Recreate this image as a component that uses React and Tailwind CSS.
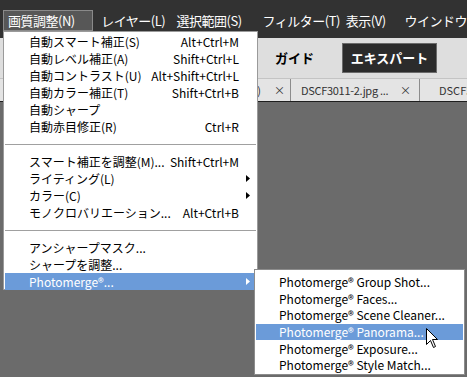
import React from 'react';

const font = { fontFamily: '"Noto Sans CJK JP", "Liberation Sans", sans-serif' };

const mainItems = [
  { label: '自動スマート補正(S)', key: 'Alt+Ctrl+M' },
  { label: '自動レベル補正(A)', key: 'Shift+Ctrl+L' },
  { label: '自動コントラスト(U)', key: 'Alt+Shift+Ctrl+L' },
  { label: '自動カラー補正(T)', key: 'Shift+Ctrl+B' },
  { label: '自動シャープ' },
  { label: '自動赤目修正(R)', key: 'Ctrl+R' },
  'sep',
  { label: 'スマート補正を調整(M)...', key: 'Shift+Ctrl+M' },
  { label: 'ライティング(L)', sub: true },
  { label: 'カラー(C)', sub: true },
  { label: 'モノクロバリエーション...', key: 'Alt+Ctrl+B' },
  'sep',
  { label: 'アンシャープマスク...' },
  { label: 'シャープを調整...' },
  { label: 'Photomerge®...', sub: true, active: true },
];

const subItems = [
  'Photomerge® Group Shot...',
  'Photomerge® Faces...',
  'Photomerge® Scene Cleaner...',
  'Photomerge® Panorama...',
  'Photomerge® Exposure...',
  'Photomerge® Style Match...',
];

function Arrow({ white }) {
  return (
    <svg width="4" height="7" viewBox="0 0 4 7" className="absolute right-[6px] top-[5px]">
      <path d="M0 0 L4 3.5 L0 7 Z" fill={white ? '#ffffff' : '#000000'} />
    </svg>
  );
}

export default function App() {
  return (
    <div className="relative w-[467px] h-[377px] overflow-hidden bg-[#6b6b6b] text-[12px]" style={font}>
      {/* menubar */}
      <div className="h-[38px] bg-[#323232] flex items-start pt-[10px] text-white text-[13px] tracking-[-0.5px]">
        <div className="ml-[3px] w-[92px] h-[21px] pl-[4px] bg-[#575757] border border-[#8a8a8a] leading-[19px]">画質調整(N)</div>
        <div className="w-[85px] pl-[8px] leading-[21px]">レイヤー(L)</div>
        <div className="w-[88px] leading-[21px]">選択範囲(S)</div>
        <div className="w-[85px] leading-[21px]">フィルター(T)</div>
        <div className="w-[60px] leading-[21px]">表示(V)</div>
        <div className="leading-[21px] whitespace-nowrap">ウインドウ</div>
      </div>

      {/* mode bar */}
      <div className="h-[40px] bg-[#dedede] flex items-center">
        <div className="ml-[275px] w-[67px] font-bold text-[13px] text-black">ガイド</div>
        <div className="w-[95px] h-[30px] bg-[#2b2b2b] border border-[#6a6a6a] flex items-center justify-center text-white font-bold text-[13px]">
          エキスパート
        </div>
      </div>

      {/* tabs */}
      <div className="h-[24px] bg-[#e4e4e4] border-t border-[#c4c4c4] border-b border-b-[#1e1e1e] flex text-[11px] text-[#333] whitespace-nowrap">
        <div className="w-[291px] shrink-0 border-r border-[#8c8c8c] flex items-center justify-end pr-[5px] gap-[13px]">
          <span>8)</span>
          <span>×</span>
        </div>
        <div className="w-[129px] shrink-0 border-r border-[#8c8c8c] flex items-center pl-[10px] pr-[8px] justify-between">
          <span className="tracking-[-0.3px]">DSCF3011-2.jpg ...</span>
          <span>×</span>
        </div>
        <div className="flex items-center pl-[19px]">DSCF3</div>
      </div>

      {/* main dropdown */}
      <div className="absolute left-[3px] top-[31px] w-[255px] h-[259px] bg-white border border-[#9a9a9a] pt-[1px] px-[1px] text-black">
        {mainItems.map((it, i) =>
          it === 'sep' ? (
            <div key={i} className="h-[18px] flex items-center">
              <div className="w-full h-px bg-[#a0a0a0]" />
            </div>
          ) : (
            <div
              key={i}
              className={`relative h-[17px] flex items-center pl-[24px] pr-[17px] leading-none ${it.active ? 'bg-[#6b9bd9] text-white' : ''}`}
            >
              <span className="flex-1 whitespace-nowrap">{it.label}</span>
              {it.key && <span className="whitespace-nowrap">{it.key}</span>}
              {it.sub && <Arrow white={it.active} />}
            </div>
          )
        )}
      </div>

      {/* submenu */}
      <div className="absolute left-[254px] top-[269px] w-[211px] h-[106px] bg-white border border-[#8c8c8c] pt-[4px] px-[1px] text-black">
        {subItems.map((s, i) => (
          <div
            key={i}
            className={`h-[16.6px] flex items-center pl-[23px] leading-none whitespace-nowrap ${i === 3 ? 'bg-[#6b9bd9] text-white' : ''}`}
          >
            {s}
          </div>
        ))}
      </div>

      {/* cursor */}
      <svg width="13" height="21" viewBox="0 0 13 21" className="absolute left-[426px] top-[328px]">
        <path d="M0.5 0.5 L0.5 16.5 L4.5 12.5 L7.5 19.5 L9.5 18.5 L6.5 11.5 L11.5 11.5 Z" fill="#ffffff" stroke="#000000" strokeWidth="1" />
      </svg>
    </div>
  );
}
